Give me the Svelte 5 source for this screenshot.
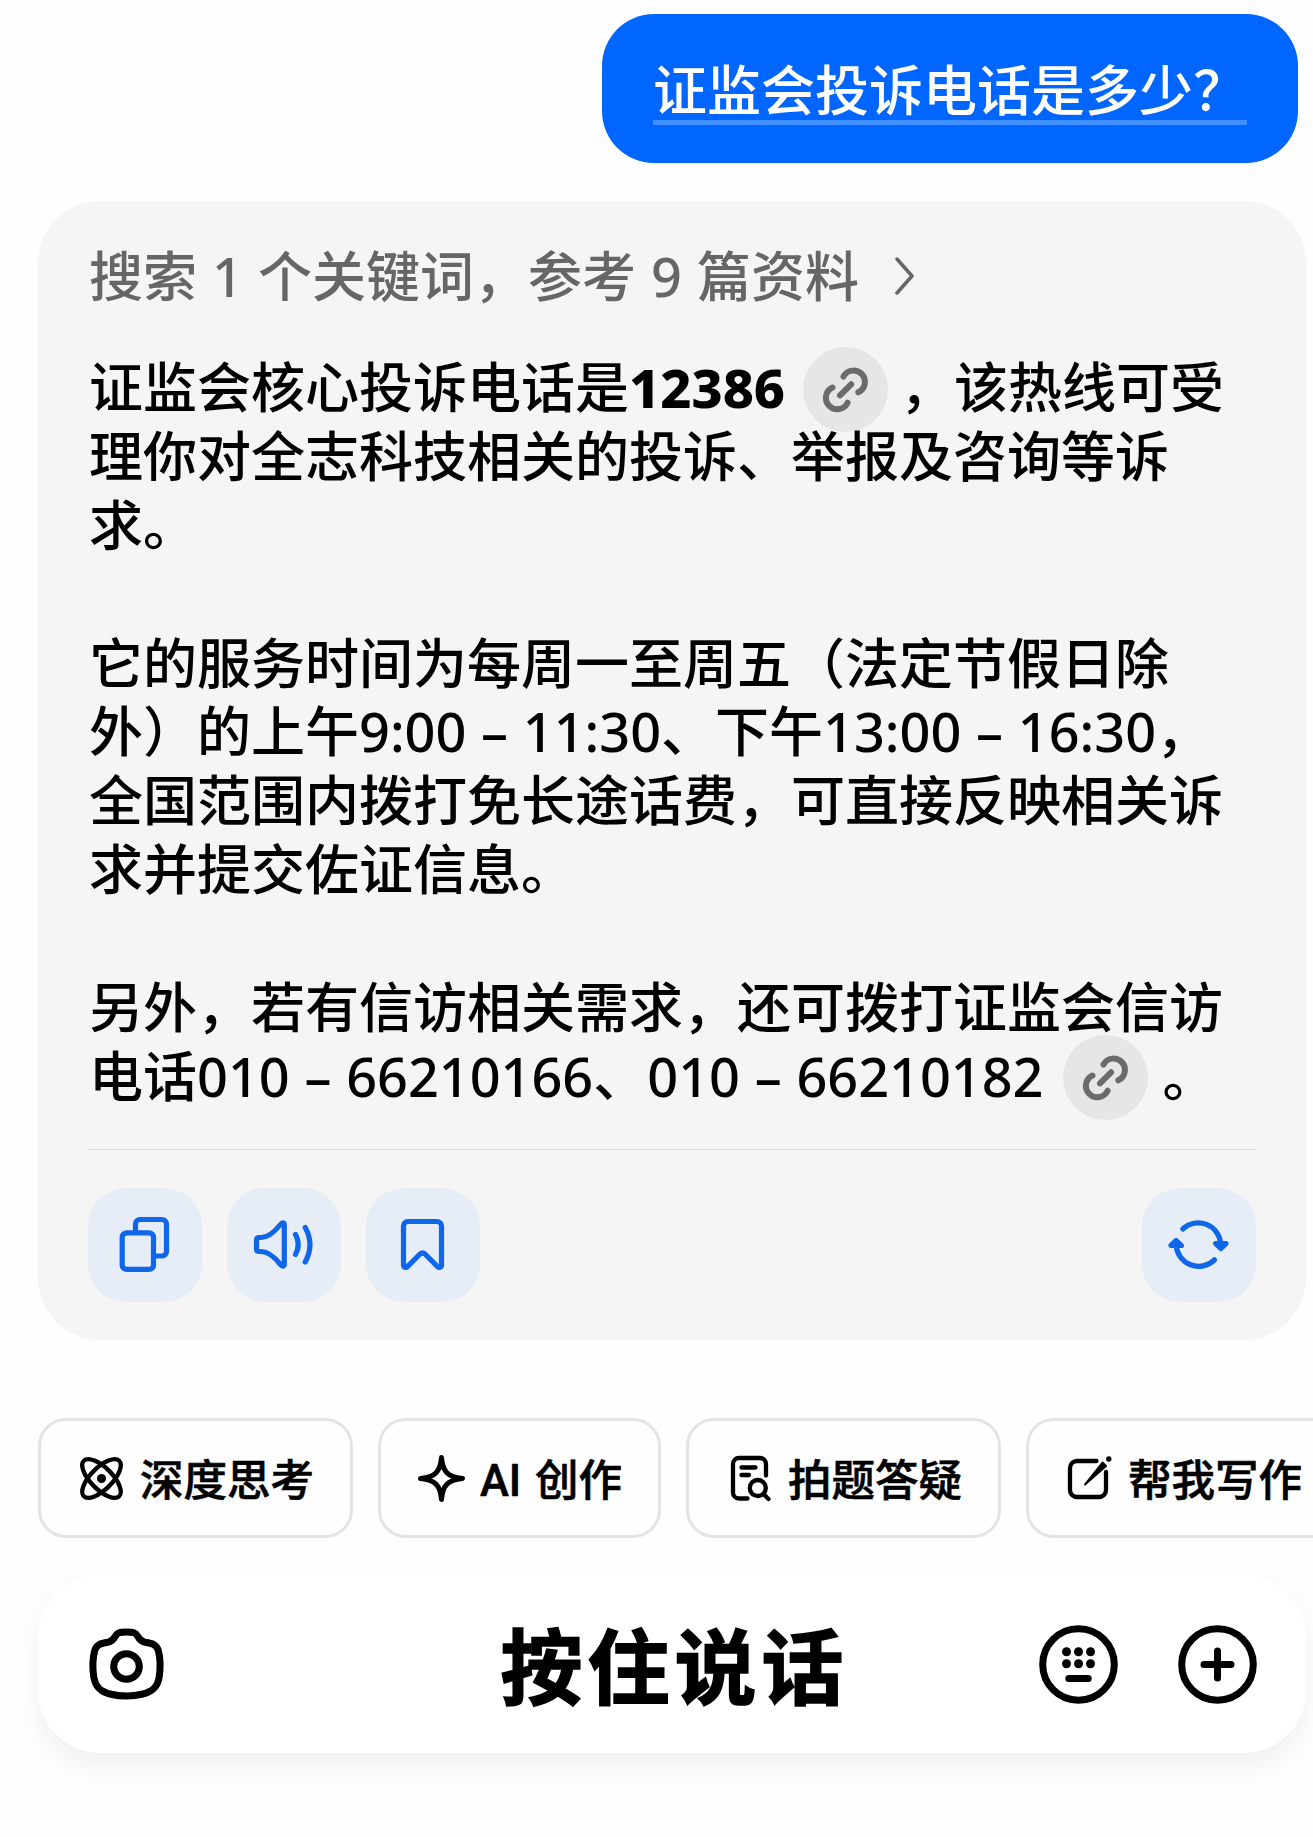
<script>
	const question = '证监会投诉电话是多少？';

	// each line is a list of runs: plain text, { num }, { strong } or { cite }
	const lines = [
		['证监会核心投诉电话是', { strong: '12386' }, { cite: true }, '，该热线可受'],
		['理你对全志科技相关的投诉、举报及咨询等诉'],
		['求。'],
		[],
		['它的服务时间为每周一至周五（法定节假日除'],
		['外）的上午', { num: '9:00 – 11:30' }, '、下午', { num: '13:00 – 16:30' }, '，'],
		['全国范围内拨打免长途话费，可直接反映相关诉'],
		['求并提交佐证信息。'],
		[],
		['另外，若有信访相关需求，还可拨打证监会信访'],
		['电话', { num: '010 – 66210166' }, '、', { num: '010 – 66210182' }, { cite: true }, '。']
	];

	const chips = [
		{ icon: 'think', label: '深度思考' },
		{ icon: 'spark', label: 'AI 创作' },
		{ icon: 'scan', label: '拍题答疑' },
		{ icon: 'write', label: '帮我写作' }
	];
</script>

<main class="chat">
	<div class="bubble"><span>{question}</span></div>

	<section class="answer">
		<header class="sources">
			<span>搜索 1 个关键词，参考 9 篇资料</span>
			<svg class="chevron" width="20" height="38" viewBox="0 0 20 38"><path d="M2 2l15 17L2 36" /></svg>
		</header>

		<div class="body">
			{#each lines as line}
				<p>
					{#each line as run}{#if run.strong}<strong>{run.strong}</strong>{:else if run.num}<span class="num">{run.num}</span>{:else if run.cite}<a class="ref" href="#ref" aria-label="来源"><svg width="85" height="85" viewBox="0 0 85 85">
						<path d="M40.5 29.5A11.4 11.4 0 1 1 55.3 45.3M37 48.4L48.1 37.3M29.5 40.5A11.4 11.4 0 1 0 44.6 55.7" />
					</svg></a>{:else}{run}{/if}{/each}
				</p>
			{/each}
		</div>

		<footer class="actions">
			<button aria-label="复制">
				<svg viewBox="0 0 114 114">
					<rect x="34.2" y="44.8" width="31.3" height="36.6" rx="4.5" />
					<path d="M47.5 44V36a4.5 4.5 0 0 1 4.5-4.5h22a4.5 4.5 0 0 1 4.5 4.5v27.5a4.5 4.5 0 0 1-4.5 4.5h-8" />
				</svg>
			</button>
			<button aria-label="朗读">
				<svg viewBox="0 0 114 114">
					<path d="M32 49.5h2c7 0 13-5 19-12.5 2.5-3 4.3-2.5 4.3 0v39c0 2.5-1.8 3-4.3 0-6-7.5-12-12.5-19-12.5h-2q-2.5 0-2.5-2.5v-9q0-2.5 2.5-2.5z" />
					<path d="M68.5 46.5q5.5 10 0 20M78.2 39.5q9.5 17 0 34.5" />
				</svg>
			</button>
			<button aria-label="收藏">
				<svg viewBox="0 0 114 114">
					<path d="M37.5 38a4.5 4.5 0 0 1 4.5-4.5h29a4.5 4.5 0 0 1 4.5 4.5v39c0 2.5-2.3 3.2-4.2 1.3l-12.3-12.3q-2.5-2-5 0l-12.3 12.3c-1.9 1.9-4.2 1.2-4.2-1.3z" />
				</svg>
			</button>
			<button class="retry" aria-label="重新生成">
				<svg viewBox="0 0 114 114">
					<path d="M40.8 41A22.5 22.5 0 0 1 78.7 56M72.5 71.8A22.5 22.5 0 0 1 34.2 57" />
					<path class="head" d="M73.5 55.5h10.5l-5.3 5zM28.9 57.5h10.5l-5.2-5z" />
				</svg>
			</button>
		</footer>
	</section>

	<nav class="chips">
		{#each chips as chip}
			<button class="chip">
				<svg width="48" height="48" viewBox="0 0 48 48">
					{#if chip.icon === 'think'}
						<ellipse cx="24.5" cy="24.5" rx="25" ry="10.8" transform="rotate(45 24.5 24.5)" />
						<ellipse cx="24.5" cy="24.5" rx="25" ry="10.8" transform="rotate(-45 24.5 24.5)" />
						<circle class="solid" cx="24.5" cy="24.5" r="4.5" />
					{:else if chip.icon === 'spark'}
						<path class="thick" d="M24.5 3.5c1.2 13.5 5.5 19.5 21 21-15.5 1.5-19.8 7.5-21 21-1.2-13.5-5.5-19.5-21-21 15.5-1.5 19.8-7.5 21-21z" />
					{:else if chip.icon === 'scan'}
						<path d="M22.5 44.5H14a6 6 0 0 1-6-6V10a6 6 0 0 1 6-6h21a6 6 0 0 1 6 6v11.5M16.5 13.5h14M16.5 21h7.5" />
						<circle cx="32.8" cy="34" r="8" />
						<path d="M38.5 40l5 5" />
					{:else}
						<path d="M31.5 7H12a7 7 0 0 0-7 7v22a7 7 0 0 0 7 7h22a7 7 0 0 0 7-7V18" />
						<path class="nib" d="M20 30.5L37.5 8.5l3.5 3.5z" />
						<circle class="solid" cx="43.8" cy="5" r="2.7" />
					{/if}
				</svg>
				<span>{chip.label}</span>
			</button>
		{/each}
	</nav>

	<div class="composer">
		<button aria-label="拍照">
			<svg width="79" height="79" viewBox="0 0 79 79">
				<path d="M28.5 11c2-3.5 4-4 11-4s9 .5 11 4 3.5 5.5 7.5 6.3c7.5 1.2 11.5 2 13.3 8.2 1.7 6.5 2.2 18 .9 26.5-1.6 10.5-7.2 14.8-16.2 17-10 2.5-23 2.5-33 0-9-2.2-14.6-6.5-16.2-17-1.3-8.5-.8-20 .9-26.5 1.8-6.2 5.8-7 13.3-8.2 4-.8 5.5-2.8 7.5-6.3z" />
				<circle cx="39.5" cy="41.5" r="12.8" />
			</svg>
		</button>
		<span class="hold">按住说话</span>
		<div class="tools">
			<button aria-label="键盘">
				<svg width="79" height="79" viewBox="0 0 79 79">
					<circle cx="39.5" cy="39.5" r="35.8" />
					{#each [27.5, 39.5, 51.5] as x}
						<circle class="solid" cx={x} cy="26.8" r="4.5" />
						<circle class="solid" cx={x} cy="38.8" r="4.5" />
					{/each}
					<path d="M29.8 53.6h19.4" />
				</svg>
			</button>
			<button aria-label="更多">
				<svg width="79" height="79" viewBox="0 0 79 79">
					<circle cx="39.5" cy="39.5" r="35.8" />
					<path d="M26 39.5h27M39.5 26v27" />
				</svg>
			</button>
		</div>
	</div>
</main>

<style>
	:global(body) { background: #fefefe; overflow: hidden; }

	.chat {
		box-sizing: border-box;
		width: 1313px;
		height: 1837px;
		padding: 14px 0 0 38px;
		overflow: hidden;
		display: flex;
		flex-direction: column;
		font-family: "Noto Sans", "Noto Sans CJK SC", sans-serif;
		font-weight: 500;
		font-size: 54px;
		color: #000;
	}

	button { margin: 0; padding: 0; border: 0; background: none; font: inherit; color: inherit; }
	svg { display: block; fill: none; stroke: currentColor; stroke-linecap: round; stroke-linejoin: round; }
	.solid { fill: currentColor; stroke: none; }

	.bubble {
		box-sizing: border-box;
		align-self: flex-end;
		width: 696px;
		height: 149px;
		margin-right: 15px;
		padding: 43px 51px 0;
		border-radius: 52px;
		background: #06f;
		color: #fff;
	}
	.bubble span { display: block; height: 63px; line-height: 67px; border-bottom: 5px solid #4090ff; white-space: nowrap; }

	.answer {
		box-sizing: border-box;
		width: 1268px;
		height: 1139px;
		margin-top: 38px;
		padding: 41px 50px 0;
		border-radius: 62px;
		background: #f5f5f5;
	}

	.sources { display: flex; align-items: center; gap: 36px; height: 68px; padding-left: 1px; line-height: 68px; color: #666; white-space: nowrap; word-spacing: 1px; }
	.chevron { stroke-width: 3.5; }

	.body { margin-top: 43px; padding: 0 0 1px 1px; }
	.body p { display: flex; align-items: center; height: 68.9px; margin: 0; line-height: 68.9px; white-space: pre; }
	strong { font-weight: 800; }
	.num { word-spacing: 0.7px; }
	.ref { margin: 4px 12px 0 18px; border-radius: 50%; background: #e6e6e6; color: #6b6b6b; }
	.num + .ref { margin: 3px 15px 0 19px; }
	.ref svg { stroke-width: 6; }

	.actions { display: flex; gap: 25px; margin-top: 37px; padding-top: 38px; border-top: 1px solid #dadada; }
	.actions button { width: 114px; height: 114px; border-radius: 38px; background: #e6edf7; color: #0f66e8; }
	.actions svg { stroke-width: 5.2; }
	.actions .head { fill: currentColor; }
	.retry { margin-left: auto; }

	.chips { display: flex; gap: 25px; margin-top: 78px; }
	.chip {
		box-sizing: border-box;
		flex: none;
		display: flex;
		align-items: center;
		gap: 15px;
		height: 120px;
		padding: 0 36px;
		border: 3px solid #e4e4e4;
		border-radius: 28px;
		font-family: Roboto, "Noto Sans CJK SC", sans-serif;
		font-size: 43.5px;
		line-height: 60px;
		word-spacing: 3px;
		white-space: nowrap;
		-webkit-text-stroke: 0.6px #000;
	}
	.chip span { padding-top: 7px; }
	.chip svg { stroke-width: 4.3; overflow: visible; }
	.chip .thick { stroke-width: 5; }
	.chip .nib { fill: currentColor; stroke-width: 2; }

	.composer {
		box-sizing: border-box;
		display: grid;
		grid-template-columns: 1fr auto 1fr;
		align-items: center;
		width: 1268px;
		height: 178px;
		margin-top: 37px;
		padding: 0 49px;
		border-radius: 62px;
		background: #fff;
		box-shadow: 0 12px 28px rgba(0, 0, 0, 0.06);
	}
	.composer svg { stroke-width: 7; }
	.hold { padding: 4px 0 0 5px; font-size: 82px; font-weight: 700; letter-spacing: 5px; line-height: 100px; -webkit-text-stroke: 1.5px #000; }
	.tools { display: flex; justify-content: flex-end; gap: 60px; }
</style>
